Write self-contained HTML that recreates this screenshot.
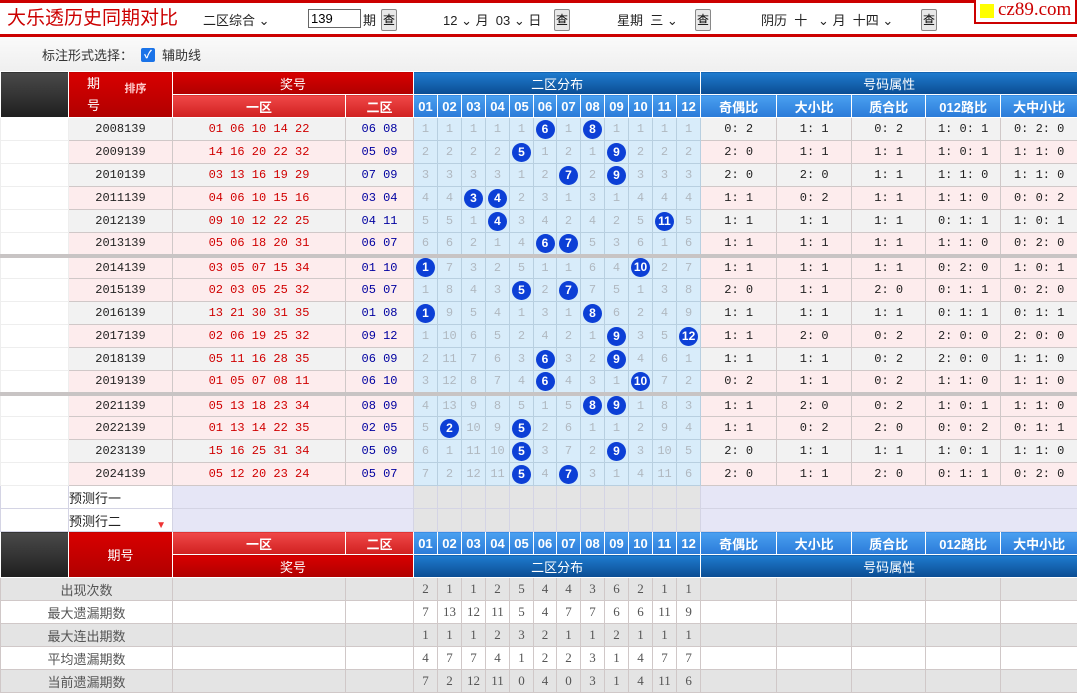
<!DOCTYPE html>
<html><head><meta charset="utf-8">
<style>
*{margin:0;padding:0;box-sizing:border-box}
body{width:1077px;height:696px;overflow:hidden;background:#fff;font-family:"Liberation Sans","Noto Sans CJK SC",sans-serif;font-size:13px;position:relative}
#top{position:absolute;left:0;top:0;width:1077px;height:37px;background:#fff;border-top:3px solid #c00;border-bottom:3px solid #c00}
#top .t{position:absolute;left:7px;top:3px;font-size:19px;line-height:26px;color:#c00}
#top span{position:absolute;top:7px;font-size:13px;color:#222}
#top .btn{position:absolute;top:6px;width:16px;height:22px;border:1px solid #888;background:#e8e8e8;font-size:12px;text-align:center;line-height:20px;border-radius:2px}
#top .inp{position:absolute;left:308px;top:6px;width:53px;height:19px;border:1px solid #666;font-size:13px;padding-left:2px;line-height:17px}
#logo{position:absolute;left:974px;top:0;width:103px;height:24px;background:#fff;border:2px solid #c00;border-top:none;font-family:"Liberation Serif",serif;font-size:19px;color:#c00;line-height:20px;padding-left:22px}
#logo i{position:absolute;left:4px;top:4px;width:14px;height:14px;background:#ff0}
#chk{position:absolute;left:0;top:37px;width:1077px;height:34px;background:linear-gradient(#fafafa,#efefef)}
#chk span{position:absolute;top:8px;font-size:13px;color:#333}
#chk b{position:absolute;left:141px;top:11px;width:14px;height:14px;background:#1a73e8;border-radius:2px;color:#fff;font-size:11px;line-height:14px;text-align:center}
table{position:absolute;left:0;top:71px;border-collapse:collapse;table-layout:fixed;width:1077px}
td{height:23px;text-align:center;border:1px solid #d0c8c8;font-family:"Liberation Mono","Noto Sans CJK SC",monospace;font-size:12px;color:#222;padding:0;white-space:nowrap;overflow:hidden}
.dk{background:linear-gradient(#4a4a4a,#1e1e1e);border-color:#fff}
.rh{background:linear-gradient(#d80000,#b00000);color:#fff;font-family:"Liberation Sans","Noto Sans CJK SC",sans-serif;font-size:13px;border-color:#fff}
.rl{background:linear-gradient(#f04848,#d02020);color:#fff;font-family:"Liberation Sans","Noto Sans CJK SC",sans-serif;font-size:13px;font-weight:bold;border-color:#fff}
.bh{background:linear-gradient(#1f7cd0,#0a4c92);color:#fff;font-family:"Liberation Sans","Noto Sans CJK SC",sans-serif;font-size:13px;border-color:#fff}
.bl{background:linear-gradient(#4aa0f0,#2a7ad8);color:#fff;font-family:"Liberation Sans","Noto Sans CJK SC",sans-serif;font-size:13px;font-weight:bold;border-color:#fff}
.bn{background:linear-gradient(#4aa0f0,#2a7ad8);color:#fff;font-family:"Liberation Sans",sans-serif;font-size:13px;font-weight:bold;border-color:#fff}
tr.g td{background:#f2f2f2}
tr.p td{background:#fdeced}
tr.s td{border-top:4px solid #c8c4c4}
td.l{background:#fff!important;border-color:#eee}
td.r{color:#d00000}
td.bb{color:#0000a0}
td.d{background:#d8ecfa!important;color:#b0b8c0;border-color:#b8cfe0}
td.d b{display:inline-block;width:19px;height:19px;border-radius:50%;background:#0c3fd6;color:#fff;font-family:"Liberation Sans",sans-serif;font-size:12px;line-height:19px;font-weight:bold}
tr.pr td{background:#e6e6f6;border-color:#d4d4e4}
tr.pr td.pd{background:#e4e4e4}
tr.st td{background:#e4e4e4;font-family:"Liberation Serif","Noto Sans CJK SC",serif;font-size:13px;color:#555}
tr.sw td{background:#fff;font-family:"Liberation Serif","Noto Sans CJK SC",serif;font-size:13px;color:#555}
td.cn{font-family:"Liberation Sans","Noto Sans CJK SC",sans-serif!important;color:#444}
td.pl{text-align:left;padding-left:0;font-family:"Liberation Sans","Noto Sans CJK SC",sans-serif;font-size:13px;position:relative;overflow:visible}
</style></head><body>
<div id="top">
<div class="t">大乐透历史同期对比</div>
<span style="left:203px">二区综合 ⌄</span>
<div class="inp">139</div>
<span style="left:363px">期</span><div class="btn" style="left:381px">查</div>
<span style="left:443px">12 ⌄ 月&nbsp;&nbsp;03 ⌄ 日</span><div class="btn" style="left:554px">查</div>
<span style="left:617px">星期&nbsp;&nbsp;三 ⌄</span><div class="btn" style="left:695px">查</div>
<span style="left:761px">阴历&nbsp;&nbsp;十&nbsp;&nbsp;&nbsp;⌄ 月&nbsp;&nbsp;十四 ⌄</span><div class="btn" style="left:921px">查</div>
</div>
<div id="logo"><i></i>cz89.com</div>
<div id="chk"><span style="left:42px">标注形式选择：</span><b>✓</b><span style="left:162px">辅助线</span></div>
<table>
<colgroup><col style="width:68px"><col style="width:104px"><col style="width:173px"><col style="width:68px"><col style="width:24px"><col style="width:24px"><col style="width:24px"><col style="width:24px"><col style="width:24px"><col style="width:23px"><col style="width:24px"><col style="width:24px"><col style="width:24px"><col style="width:24px"><col style="width:24px"><col style="width:24px"><col style="width:76px"><col style="width:75px"><col style="width:74px"><col style="width:75px"><col style="width:77px"></colgroup>
<tr><td class="dk" rowspan="2"></td><td class="rh" rowspan="2" style="text-align:left;padding-left:18px;line-height:22px">期<br>号<span style="position:absolute;left:124px;top:6px;font-size:11px;color:#fcc;font-weight:bold">排序</span></td><td class="rh" colspan="2">奖号</td><td class="bh" colspan="12">二区分布</td><td class="bh" colspan="5">号码属性</td></tr>
<tr><td class="rl">一区</td><td class="rl">二区</td><td class="bn">01</td><td class="bn">02</td><td class="bn">03</td><td class="bn">04</td><td class="bn">05</td><td class="bn">06</td><td class="bn">07</td><td class="bn">08</td><td class="bn">09</td><td class="bn">10</td><td class="bn">11</td><td class="bn">12</td><td class="bl">奇偶比</td><td class="bl">大小比</td><td class="bl">质合比</td><td class="bl">012路比</td><td class="bl">大中小比</td></tr>
<tr class="g"><td class="l"></td><td>2008139</td><td class="r">01 06 10 14 22</td><td class="bb">06 08</td><td class="d">1</td><td class="d">1</td><td class="d">1</td><td class="d">1</td><td class="d">1</td><td class="d"><b>6</b></td><td class="d">1</td><td class="d"><b>8</b></td><td class="d">1</td><td class="d">1</td><td class="d">1</td><td class="d">1</td><td>0: 2</td><td>1: 1</td><td>0: 2</td><td>1: 0: 1</td><td>0: 2: 0</td></tr>
<tr class="p"><td class="l"></td><td>2009139</td><td class="r">14 16 20 22 32</td><td class="bb">05 09</td><td class="d">2</td><td class="d">2</td><td class="d">2</td><td class="d">2</td><td class="d"><b>5</b></td><td class="d">1</td><td class="d">2</td><td class="d">1</td><td class="d"><b>9</b></td><td class="d">2</td><td class="d">2</td><td class="d">2</td><td>2: 0</td><td>1: 1</td><td>1: 1</td><td>1: 0: 1</td><td>1: 1: 0</td></tr>
<tr class="g"><td class="l"></td><td>2010139</td><td class="r">03 13 16 19 29</td><td class="bb">07 09</td><td class="d">3</td><td class="d">3</td><td class="d">3</td><td class="d">3</td><td class="d">1</td><td class="d">2</td><td class="d"><b>7</b></td><td class="d">2</td><td class="d"><b>9</b></td><td class="d">3</td><td class="d">3</td><td class="d">3</td><td>2: 0</td><td>2: 0</td><td>1: 1</td><td>1: 1: 0</td><td>1: 1: 0</td></tr>
<tr class="p"><td class="l"></td><td>2011139</td><td class="r">04 06 10 15 16</td><td class="bb">03 04</td><td class="d">4</td><td class="d">4</td><td class="d"><b>3</b></td><td class="d"><b>4</b></td><td class="d">2</td><td class="d">3</td><td class="d">1</td><td class="d">3</td><td class="d">1</td><td class="d">4</td><td class="d">4</td><td class="d">4</td><td>1: 1</td><td>0: 2</td><td>1: 1</td><td>1: 1: 0</td><td>0: 0: 2</td></tr>
<tr class="g"><td class="l"></td><td>2012139</td><td class="r">09 10 12 22 25</td><td class="bb">04 11</td><td class="d">5</td><td class="d">5</td><td class="d">1</td><td class="d"><b>4</b></td><td class="d">3</td><td class="d">4</td><td class="d">2</td><td class="d">4</td><td class="d">2</td><td class="d">5</td><td class="d"><b>11</b></td><td class="d">5</td><td>1: 1</td><td>1: 1</td><td>1: 1</td><td>0: 1: 1</td><td>1: 0: 1</td></tr>
<tr class="p"><td class="l"></td><td>2013139</td><td class="r">05 06 18 20 31</td><td class="bb">06 07</td><td class="d">6</td><td class="d">6</td><td class="d">2</td><td class="d">1</td><td class="d">4</td><td class="d"><b>6</b></td><td class="d"><b>7</b></td><td class="d">5</td><td class="d">3</td><td class="d">6</td><td class="d">1</td><td class="d">6</td><td>1: 1</td><td>1: 1</td><td>1: 1</td><td>1: 1: 0</td><td>0: 2: 0</td></tr>
<tr class="p s"><td class="l"></td><td>2014139</td><td class="r">03 05 07 15 34</td><td class="bb">01 10</td><td class="d"><b>1</b></td><td class="d">7</td><td class="d">3</td><td class="d">2</td><td class="d">5</td><td class="d">1</td><td class="d">1</td><td class="d">6</td><td class="d">4</td><td class="d"><b>10</b></td><td class="d">2</td><td class="d">7</td><td>1: 1</td><td>1: 1</td><td>1: 1</td><td>0: 2: 0</td><td>1: 0: 1</td></tr>
<tr class="p"><td class="l"></td><td>2015139</td><td class="r">02 03 05 25 32</td><td class="bb">05 07</td><td class="d">1</td><td class="d">8</td><td class="d">4</td><td class="d">3</td><td class="d"><b>5</b></td><td class="d">2</td><td class="d"><b>7</b></td><td class="d">7</td><td class="d">5</td><td class="d">1</td><td class="d">3</td><td class="d">8</td><td>2: 0</td><td>1: 1</td><td>2: 0</td><td>0: 1: 1</td><td>0: 2: 0</td></tr>
<tr class="g"><td class="l"></td><td>2016139</td><td class="r">13 21 30 31 35</td><td class="bb">01 08</td><td class="d"><b>1</b></td><td class="d">9</td><td class="d">5</td><td class="d">4</td><td class="d">1</td><td class="d">3</td><td class="d">1</td><td class="d"><b>8</b></td><td class="d">6</td><td class="d">2</td><td class="d">4</td><td class="d">9</td><td>1: 1</td><td>1: 1</td><td>1: 1</td><td>0: 1: 1</td><td>0: 1: 1</td></tr>
<tr class="p"><td class="l"></td><td>2017139</td><td class="r">02 06 19 25 32</td><td class="bb">09 12</td><td class="d">1</td><td class="d">10</td><td class="d">6</td><td class="d">5</td><td class="d">2</td><td class="d">4</td><td class="d">2</td><td class="d">1</td><td class="d"><b>9</b></td><td class="d">3</td><td class="d">5</td><td class="d"><b>12</b></td><td>1: 1</td><td>2: 0</td><td>0: 2</td><td>2: 0: 0</td><td>2: 0: 0</td></tr>
<tr class="g"><td class="l"></td><td>2018139</td><td class="r">05 11 16 28 35</td><td class="bb">06 09</td><td class="d">2</td><td class="d">11</td><td class="d">7</td><td class="d">6</td><td class="d">3</td><td class="d"><b>6</b></td><td class="d">3</td><td class="d">2</td><td class="d"><b>9</b></td><td class="d">4</td><td class="d">6</td><td class="d">1</td><td>1: 1</td><td>1: 1</td><td>0: 2</td><td>2: 0: 0</td><td>1: 1: 0</td></tr>
<tr class="p"><td class="l"></td><td>2019139</td><td class="r">01 05 07 08 11</td><td class="bb">06 10</td><td class="d">3</td><td class="d">12</td><td class="d">8</td><td class="d">7</td><td class="d">4</td><td class="d"><b>6</b></td><td class="d">4</td><td class="d">3</td><td class="d">1</td><td class="d"><b>10</b></td><td class="d">7</td><td class="d">2</td><td>0: 2</td><td>1: 1</td><td>0: 2</td><td>1: 1: 0</td><td>1: 1: 0</td></tr>
<tr class="p s"><td class="l"></td><td>2021139</td><td class="r">05 13 18 23 34</td><td class="bb">08 09</td><td class="d">4</td><td class="d">13</td><td class="d">9</td><td class="d">8</td><td class="d">5</td><td class="d">1</td><td class="d">5</td><td class="d"><b>8</b></td><td class="d"><b>9</b></td><td class="d">1</td><td class="d">8</td><td class="d">3</td><td>1: 1</td><td>2: 0</td><td>0: 2</td><td>1: 0: 1</td><td>1: 1: 0</td></tr>
<tr class="p"><td class="l"></td><td>2022139</td><td class="r">01 13 14 22 35</td><td class="bb">02 05</td><td class="d">5</td><td class="d"><b>2</b></td><td class="d">10</td><td class="d">9</td><td class="d"><b>5</b></td><td class="d">2</td><td class="d">6</td><td class="d">1</td><td class="d">1</td><td class="d">2</td><td class="d">9</td><td class="d">4</td><td>1: 1</td><td>0: 2</td><td>2: 0</td><td>0: 0: 2</td><td>0: 1: 1</td></tr>
<tr class="g"><td class="l"></td><td>2023139</td><td class="r">15 16 25 31 34</td><td class="bb">05 09</td><td class="d">6</td><td class="d">1</td><td class="d">11</td><td class="d">10</td><td class="d"><b>5</b></td><td class="d">3</td><td class="d">7</td><td class="d">2</td><td class="d"><b>9</b></td><td class="d">3</td><td class="d">10</td><td class="d">5</td><td>2: 0</td><td>1: 1</td><td>1: 1</td><td>1: 0: 1</td><td>1: 1: 0</td></tr>
<tr class="p"><td class="l"></td><td>2024139</td><td class="r">05 12 20 23 24</td><td class="bb">05 07</td><td class="d">7</td><td class="d">2</td><td class="d">12</td><td class="d">11</td><td class="d"><b>5</b></td><td class="d">4</td><td class="d"><b>7</b></td><td class="d">3</td><td class="d">1</td><td class="d">4</td><td class="d">11</td><td class="d">6</td><td>2: 0</td><td>1: 1</td><td>2: 0</td><td>0: 1: 1</td><td>0: 2: 0</td></tr>
<tr class="pr"><td class="l"></td><td class="l pl" style="color:#222">预测行一</td><td colspan="2"></td><td class="pd"></td><td class="pd"></td><td class="pd"></td><td class="pd"></td><td class="pd"></td><td class="pd"></td><td class="pd"></td><td class="pd"></td><td class="pd"></td><td class="pd"></td><td class="pd"></td><td class="pd"></td><td colspan="5"></td></tr>
<tr class="pr"><td class="l"></td><td class="l pl" style="color:#222">预测行二<span style="position:absolute;right:6px;bottom:0;color:#e33;font-size:10px">▼</span></td><td colspan="2"></td><td class="pd"></td><td class="pd"></td><td class="pd"></td><td class="pd"></td><td class="pd"></td><td class="pd"></td><td class="pd"></td><td class="pd"></td><td class="pd"></td><td class="pd"></td><td class="pd"></td><td class="pd"></td><td colspan="5"></td></tr>
<tr><td class="dk" rowspan="2"></td><td class="rh" rowspan="2">期号</td><td class="rl">一区</td><td class="rl">二区</td><td class="bn">01</td><td class="bn">02</td><td class="bn">03</td><td class="bn">04</td><td class="bn">05</td><td class="bn">06</td><td class="bn">07</td><td class="bn">08</td><td class="bn">09</td><td class="bn">10</td><td class="bn">11</td><td class="bn">12</td><td class="bl">奇偶比</td><td class="bl">大小比</td><td class="bl">质合比</td><td class="bl">012路比</td><td class="bl">大中小比</td></tr>
<tr><td class="rh" colspan="2">奖号</td><td class="bh" colspan="12">二区分布</td><td class="bh" colspan="5">号码属性</td></tr>
<tr class="st"><td colspan="2" class="cn">出现次数</td><td></td><td></td><td>2</td><td>1</td><td>1</td><td>2</td><td>5</td><td>4</td><td>4</td><td>3</td><td>6</td><td>2</td><td>1</td><td>1</td><td></td><td></td><td></td><td></td><td></td></tr>
<tr class="sw"><td colspan="2" class="cn">最大遗漏期数</td><td></td><td></td><td>7</td><td>13</td><td>12</td><td>11</td><td>5</td><td>4</td><td>7</td><td>7</td><td>6</td><td>6</td><td>11</td><td>9</td><td></td><td></td><td></td><td></td><td></td></tr>
<tr class="st"><td colspan="2" class="cn">最大连出期数</td><td></td><td></td><td>1</td><td>1</td><td>1</td><td>2</td><td>3</td><td>2</td><td>1</td><td>1</td><td>2</td><td>1</td><td>1</td><td>1</td><td></td><td></td><td></td><td></td><td></td></tr>
<tr class="sw"><td colspan="2" class="cn">平均遗漏期数</td><td></td><td></td><td>4</td><td>7</td><td>7</td><td>4</td><td>1</td><td>2</td><td>2</td><td>3</td><td>1</td><td>4</td><td>7</td><td>7</td><td></td><td></td><td></td><td></td><td></td></tr>
<tr class="st"><td colspan="2" class="cn">当前遗漏期数</td><td></td><td></td><td>7</td><td>2</td><td>12</td><td>11</td><td>0</td><td>4</td><td>0</td><td>3</td><td>1</td><td>4</td><td>11</td><td>6</td><td></td><td></td><td></td><td></td><td></td></tr>
</table>
</body></html>
